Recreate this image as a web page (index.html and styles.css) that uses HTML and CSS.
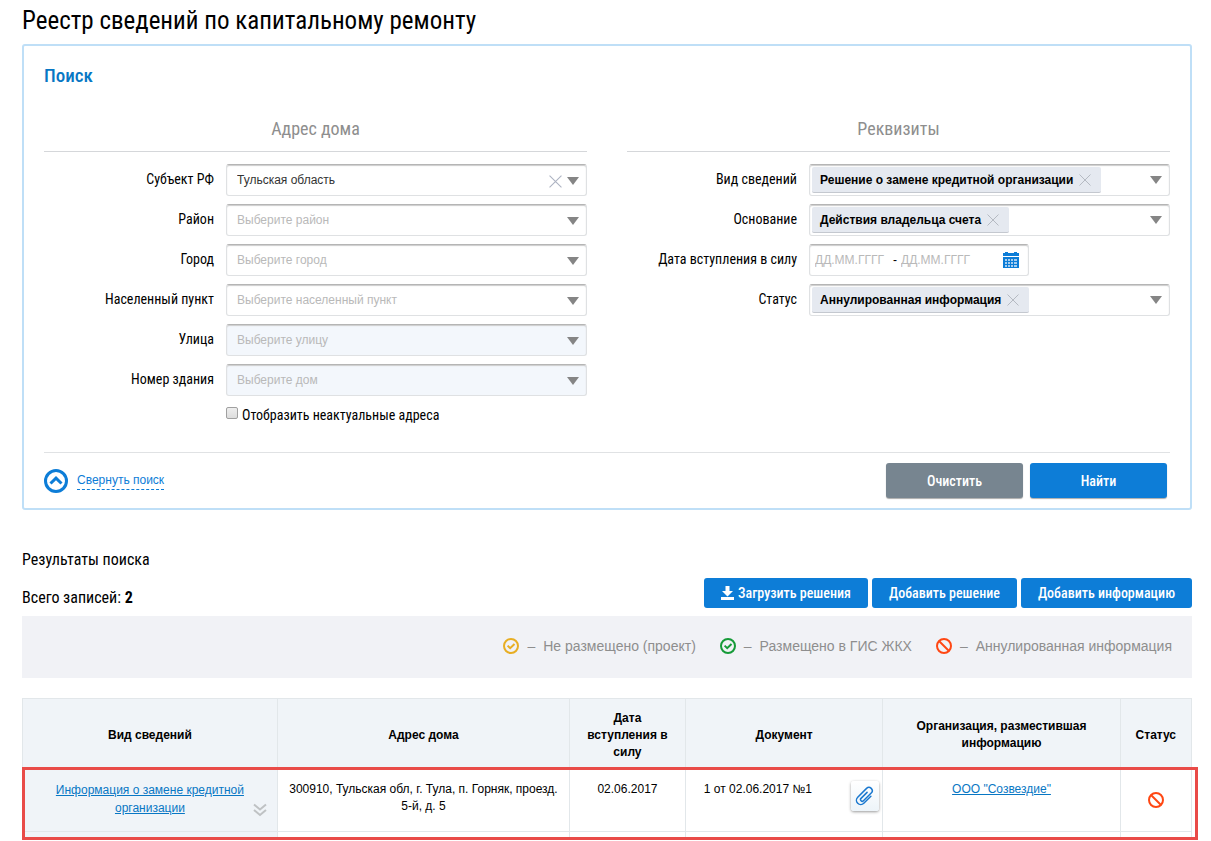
FILE: index.html
```html
<!DOCTYPE html>
<html lang="ru">
  <head>
    <meta charset="UTF-8">
    <title>Реестр сведений по капитальному ремонту</title>
    <link rel="stylesheet" href="styles.css">
  </head>
  <body>
    <svg class="sprite" width="0" height="0">
      <symbol id="cross" viewBox="0 0 12 12">
        <path d="M0.5 0.5 L11.5 11.5 M11.5 0.5 L0.5 11.5" fill="none" stroke="currentColor"/>
      </symbol>
      <symbol id="check" viewBox="0 0 16 16">
        <circle cx="8" cy="8" r="7" fill="none" stroke="currentColor" stroke-width="2"/>
        <path d="M4.6 7.6 L7.2 10.2 L11.5 6" fill="none" stroke="currentColor" stroke-width="2"/>
      </symbol>
      <symbol id="ban" viewBox="0 0 16 16">
        <circle cx="8" cy="8" r="7" fill="none" stroke="currentColor" stroke-width="2"/>
        <path d="M3 3 L13 13" stroke="currentColor" stroke-width="2"/>
      </symbol>
      <symbol id="arrow" viewBox="0 0 12 8">
        <path d="M0 0 H12 L6 8 Z" fill="currentColor"/>
      </symbol>
    </svg>

    <h1>Реестр сведений по капитальному ремонту</h1>

    <form class="search">
      <h2>Поиск</h2>
      <div class="columns">
        <div class="column">
          <h3>Адрес дома</h3>
          <div class="row">
            <label for="region">Субъект РФ</label>
            <div class="field">
              <select id="region" class="filled"><option>Тульская область</option></select>
              <button type="button" class="clear" aria-label="Очистить"><svg width="13" height="13"><use href="#cross"/></svg></button>
              <svg class="arrow" width="12" height="8"><use href="#arrow"/></svg>
            </div>
          </div>
          <div class="row">
            <label for="district">Район</label>
            <div class="field">
              <select id="district"><option>Выберите район</option></select>
              <svg class="arrow" width="12" height="8"><use href="#arrow"/></svg>
            </div>
          </div>
          <div class="row">
            <label for="city">Город</label>
            <div class="field">
              <select id="city"><option>Выберите город</option></select>
              <svg class="arrow" width="12" height="8"><use href="#arrow"/></svg>
            </div>
          </div>
          <div class="row">
            <label for="settlement">Населенный пункт</label>
            <div class="field">
              <select id="settlement"><option>Выберите населенный пункт</option></select>
              <svg class="arrow" width="12" height="8"><use href="#arrow"/></svg>
            </div>
          </div>
          <div class="row">
            <label for="street">Улица</label>
            <div class="field">
              <select id="street" disabled><option>Выберите улицу</option></select>
              <svg class="arrow" width="12" height="8"><use href="#arrow"/></svg>
            </div>
          </div>
          <div class="row">
            <label for="house">Номер здания</label>
            <div class="field">
              <select id="house" disabled><option>Выберите дом</option></select>
              <svg class="arrow" width="12" height="8"><use href="#arrow"/></svg>
            </div>
          </div>
          <div class="check-row">
            <input type="checkbox" id="old">
            <label for="old">Отобразить неактуальные адреса</label>
          </div>
        </div>

        <div class="column">
          <h3>Реквизиты</h3>
          <div class="row">
            <label for="kind">Вид сведений</label>
            <div class="field tags">
              <span class="tag">Решение о замене кредитной организации
                <button type="button" aria-label="Удалить"><svg width="12" height="12"><use href="#cross"/></svg></button>
              </span>
              <button type="button" id="kind" class="open"><svg width="12" height="8"><use href="#arrow"/></svg></button>
            </div>
          </div>
          <div class="row">
            <label for="reason">Основание</label>
            <div class="field tags">
              <span class="tag">Действия владельца счета
                <button type="button" aria-label="Удалить"><svg width="12" height="12"><use href="#cross"/></svg></button>
              </span>
              <button type="button" id="reason" class="open"><svg width="12" height="8"><use href="#arrow"/></svg></button>
            </div>
          </div>
          <div class="row">
            <label for="from">Дата вступления в силу</label>
            <div class="field dates">
              <input type="text" id="from" placeholder="ДД.ММ.ГГГГ">
              <span>-</span>
              <input type="text" id="to" placeholder="ДД.ММ.ГГГГ" aria-label="Дата по">
              <button type="button" class="calendar" aria-label="Календарь">
                <svg width="16" height="17" viewBox="0 0 16 17">
                  <path d="M0 1 H2 V0 H5 V1 H11 V0 H14 V1 H16 V4 H0 Z M0 5 H16 V16 H0 Z" fill="#0d7dd7"/>
                  <path d="M2 7h2v2h-2z M5 7h2v2h-2z M8 7h2v2h-2z M11 7h3v2h-3z M2 10h2v2h-2z M5 10h2v2h-2z M8 10h2v2h-2z M11 10h3v2h-3z M2 13h2v2h-2z M5 13h2v2h-2z M8 13h2v2h-2z M11 13h3v2h-3z" fill="#a5cdf0"/>
                </svg>
              </button>
            </div>
          </div>
          <div class="row">
            <label for="status">Статус</label>
            <div class="field tags">
              <span class="tag">Аннулированная информация
                <button type="button" aria-label="Удалить"><svg width="12" height="12"><use href="#cross"/></svg></button>
              </span>
              <button type="button" id="status" class="open"><svg width="12" height="8"><use href="#arrow"/></svg></button>
            </div>
          </div>
        </div>
      </div>

      <div class="search-footer">
        <a href="#" class="collapse">
          <svg width="24" height="24" viewBox="0 0 24 24" fill="none" stroke="#0d7dd7" stroke-width="3">
            <circle cx="12" cy="12" r="10.5"/>
            <path d="M6.5 14.5 L12 9.2 L17.5 14.5"/>
          </svg>
          <span>Свернуть поиск</span>
        </a>
        <div class="buttons">
          <button type="reset" class="btn big gray">Очистить</button>
          <button type="submit" class="btn big">Найти</button>
        </div>
      </div>
    </form>

    <div class="results-title">Результаты поиска</div>
    <div class="results-bar">
      <div class="total">Всего записей: <b>2</b></div>
      <div class="actions">
        <button type="button" class="btn">
          <svg width="13" height="14" viewBox="0 0 13 14"><path d="M4.5 0 H8.5 V5 H12 L6.5 10.5 L1 5 H4.5 Z M0 11 H13 V14 H0 Z" fill="#fff"/></svg>
          Загрузить решения
        </button>
        <button type="button" class="btn">Добавить решение</button>
        <button type="button" class="btn">Добавить информацию</button>
      </div>
    </div>

    <div class="legend">
      <div class="legend-item"><svg class="yellow" width="16" height="16"><use href="#check"/></svg><span>–</span><span>Не размещено (проект)</span></div>
      <div class="legend-item"><svg class="green" width="16" height="16"><use href="#check"/></svg><span>–</span><span>Размещено в ГИС ЖКХ</span></div>
      <div class="legend-item"><svg class="red" width="16" height="16"><use href="#ban"/></svg><span>–</span><span>Аннулированная информация</span></div>
    </div>

    <div class="table-wrap">
      <table>
        <colgroup>
          <col class="c-kind"><col class="c-address"><col class="c-date"><col class="c-doc"><col class="c-org"><col class="c-status">
        </colgroup>
        <thead>
          <tr>
            <th>Вид сведений</th>
            <th>Адрес дома</th>
            <th>Дата вступления в силу</th>
            <th>Документ</th>
            <th>Организация, разместившая информацию</th>
            <th>Статус</th>
          </tr>
        </thead>
        <tbody>
          <tr>
            <td class="kind">
              <div class="kind-cell">
                <a href="#">Информация о замене кредитной организации</a>
                <svg width="14" height="14" viewBox="0 0 14 14" fill="none" stroke="#bfc2c4" stroke-width="2"><path d="M1 1.5 L7 6.5 L13 1.5 M1 7 L7 12 L13 7"/></svg>
              </div>
            </td>
            <td>300910, Тульская обл, г. Тула, п. Горняк, проезд. 5-й, д. 5</td>
            <td>02.06.2017</td>
            <td>
              <div class="doc-cell">
                <span>1 от 02.06.2017 №1</span>
                <button type="button" class="clip" aria-label="Файлы">
                  <svg width="20" height="20" viewBox="-10 -10 20 20" fill="none" stroke="#1a78cf" stroke-width="1.5" stroke-linecap="round">
                    <path transform="rotate(-45)" d="M4 4.300 H-6 A4.300 4.300 0 0 1 -6 -4.300 H6.500 A3.300 3.300 0 0 1 6.500 2.300 H-4.500 A1.700 1.700 0 0 1 -4.500 -1.100 H4"/>
                  </svg>
                </button>
              </div>
            </td>
            <td><a href="#">ООО "Созвездие"</a></td>
            <td class="state"><svg class="red" width="16" height="16"><use href="#ban"/></svg></td>
          </tr>
          <tr class="next">
            <td class="kind"></td><td></td><td></td><td></td><td></td><td></td>
          </tr>
        </tbody>
      </table>
      <div class="highlight"></div>
    </div>
  </body>
</html>
```
FILE: styles.css
```css
* {
    box-sizing: border-box;
}
body {
    margin: 0;
    padding: 5px 19px 0 22px;
    background: #fff;
    color: #000;
    font-family: "Liberation Sans", Arial, sans-serif;
    font-size: 12px;
}
h1, h2, h3, label, .btn, .results-title, .total {
    font-family: "Roboto Condensed", "Liberation Sans Narrow", Roboto, sans-serif;
}
h1, h2, h3 {
    margin: 0;
    font-weight: 400;
}
button, select, input {
    font-family: inherit;
    font-size: 12px;
}
button {
    padding: 0;
    border: none;
    background: none;
    cursor: pointer;
}
svg {
    display: block;
}
.sprite {
    position: absolute;
}
a {
    color: #0877c4;
}

h1 {
    font-size: 25px;
    line-height: 32px;
    padding-bottom: 7px;
}

/* search panel */
.search {
    border: 2px solid #bfdff7;
    border-radius: 3px;
    padding: 18px 20px 10px;
}
h2 {
    color: #0877c4;
    font-size: 19px;
    font-weight: 500;
    line-height: 24px;
}
.columns {
    display: flex;
    gap: 40px;
    padding-top: 24px;
}
.column {
    flex: 1;
    min-width: 0;
}
h3 {
    height: 40px;
    margin-bottom: 12px;
    border-bottom: 1px solid #d5d7da;
    color: #8e8e8e;
    font-size: 18px;
    line-height: 34px;
    text-align: center;
}
.row {
    display: flex;
    align-items: center;
    gap: 12px;
    margin-bottom: 8px;
}
.row label {
    flex: 1;
    padding-bottom: 2px;
    text-align: right;
}
label {
    font-size: 14px;
    line-height: 20px;
}
.field {
    position: relative;
    width: 361px;
    height: 32px;
}
select, .tags, .dates {
    border: 1px solid #dfe1e3;
    border-top: 1px solid #b5b5b5;
    border-radius: 3px;
    box-shadow: inset 0 1px 1px #ccc;
    background: #fff;
}
select {
    appearance: none;
    width: 100%;
    height: 100%;
    padding: 0 50px 1px 10px;
    color: #b9b9b9;
    opacity: 1;
}
select:disabled {
    background: #f3f7fc;
    color: #b9b9b9;
    opacity: 1;
}
select.filled {
    color: #333;
}
.arrow {
    position: absolute;
    right: 8px;
    top: 13px;
    color: #858585;
    pointer-events: none;
}
.clear {
    position: absolute;
    right: 25px;
    top: 11px;
    color: #adb3c2;
}
.tags {
    display: flex;
    align-items: center;
    justify-content: space-between;
    padding: 0 7px 0 2px;
}
.tag {
    display: flex;
    align-items: center;
    gap: 6px;
    height: 26px;
    padding: 0 10px 0 8px;
    border-bottom: 1px solid #c4c8cf;
    border-radius: 2px;
    background: #e5e9f0;
    font-weight: bold;
}
.tag button {
    color: #b5bac2;
}
.open {
    color: #858585;
}
.dates {
    display: flex;
    align-items: center;
    gap: 4px;
    width: 220px;
    margin-right: 141px;
    padding: 0 9px 0 5px;
}
.dates input {
    width: 74px;
    padding: 0;
    border: none;
    background: none;
}
.dates input::placeholder {
    color: #b9b9b9;
}
.calendar {
    margin-left: auto;
}
.check-row {
    display: flex;
    align-items: center;
    gap: 4px;
    padding: 1px 0 0 182px;
}
.check-row input {
    appearance: none;
    width: 12px;
    height: 12px;
    margin: 0 0 4px;
    border: 1px solid #a0a0a0;
    border-radius: 2px;
    background: linear-gradient(#eee, #ddd);
}
.search-footer {
    display: flex;
    justify-content: space-between;
    align-items: center;
    margin-top: 27px;
    padding: 10px 3px 0 0;
    border-top: 1px solid #e0e2e4;
}
.collapse {
    display: flex;
    align-items: center;
    gap: 9px;
    color: #0d7dd7;
    text-decoration: none;
}
.collapse span {
    padding-bottom: 1px;
    border-bottom: 1px dashed #0d7dd7;
    line-height: 16px;
}
.buttons {
    display: flex;
    gap: 7px;
}
.btn {
    display: flex;
    align-items: center;
    justify-content: center;
    gap: 4px;
    height: 30px;
    padding: 0 17px;
    border-radius: 3px;
    background: #0d7dd7;
    color: #fff;
    font-size: 14px;
    font-weight: 500;
}
.btn.big {
    width: 137px;
    height: 35px;
    box-shadow: 0 1px 1px #aaa;
}
.btn.gray {
    background: #778590;
}

/* results */
.results-title {
    margin-top: 38px;
    font-size: 16px;
    line-height: 24px;
}
.results-bar {
    display: flex;
    justify-content: space-between;
    align-items: flex-start;
    margin: 6px 0;
}
.total {
    padding-top: 8px;
    font-size: 16px;
    line-height: 24px;
}
.actions {
    display: flex;
    gap: 4px;
}
.legend {
    display: flex;
    justify-content: flex-end;
    align-items: center;
    gap: 24px;
    height: 62px;
    padding: 0 20px 2px;
    background: #f1f2f6;
    color: #8e8e8e;
    font-size: 14px;
}
.legend-item {
    display: flex;
    align-items: center;
    gap: 8px;
}
.yellow {
    color: #e8ae23;
}
.green {
    color: #169b38;
}
.red {
    color: #ff4713;
}

.table-wrap {
    position: relative;
    margin-top: 20px;
}
table {
    width: 100%;
    border-collapse: collapse;
    table-layout: fixed;
}
.c-kind { width: 21.8%; }
.c-address { width: 25%; }
.c-date { width: 9.9%; }
.c-doc { width: 16.9%; }
.c-org { width: 20.3%; }
.c-status { width: 6.1%; }
th, td {
    border: 1px solid #e2e7ea;
    line-height: 17px;
    text-align: center;
}
th {
    height: 71px;
    padding: 2px 10px 0;
    background: #f0f4f8;
}
td {
    height: 62px;
    padding: 11px 8px 0;
    vertical-align: top;
}
td.kind {
    background: #f0f4f8;
}
.kind-cell {
    display: flex;
    align-items: flex-end;
    margin-right: 2px;
    line-height: 18px;
}
.kind-cell a {
    flex: 1;
    padding-left: 16px;
}
.doc-cell {
    display: flex;
    justify-content: space-between;
    margin-right: -5px;
    padding-left: 10px;
}
.clip {
    display: flex;
    align-items: center;
    justify-content: center;
    width: 28px;
    height: 30px;
    border-radius: 3px;
    background: linear-gradient(#fff, #edf4f9);
    box-shadow: 0 1px 3px #999;
}
td.state {
    padding: 0 0 2px;
    vertical-align: middle;
}
.state svg {
    margin: 0 auto;
}
.next td {
    height: 8px;
    padding: 0;
}
.highlight {
    position: absolute;
    top: 69px;
    left: 0;
    right: -6px;
    bottom: 0;
    border: 3px solid #e94b48;
    pointer-events: none;
}
```
